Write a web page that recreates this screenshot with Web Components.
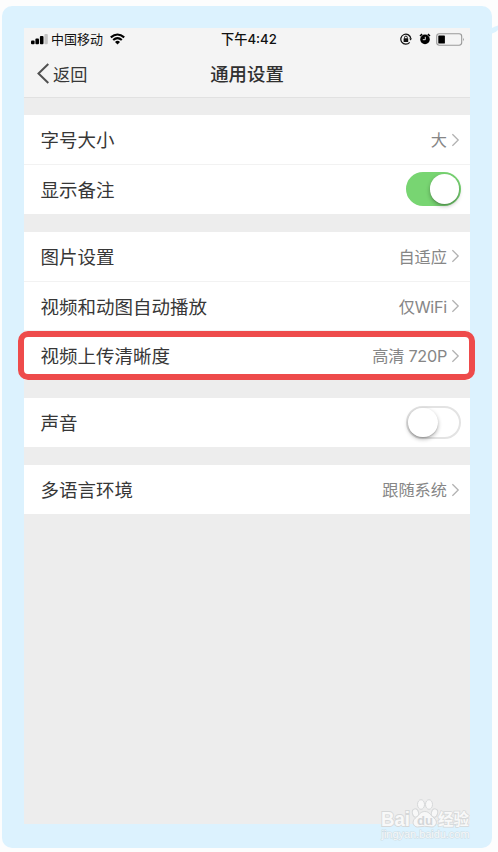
<!DOCTYPE html>
<html lang="zh-CN">
<head>
<meta charset="utf-8">
<title>通用设置</title>
<style>
    body {
        margin: 0;
        width: 498px;
        height: 852px;
        overflow: hidden;
        background: #fdfdfd;
        font-family: "Liberation Sans", "Noto Sans CJK SC", sans-serif;
        color: #373737;
    }
</style>
</head>
<body>
<phone-frame>
    <status-bar carrier="中国移动" time="下午4:42"></status-bar>
    <nav-bar back="返回">通用设置</nav-bar>
    <settings-group>
        <settings-row label="字号大小">大</settings-row>
        <settings-row label="显示备注" kind="switch"><toggle-switch on></toggle-switch></settings-row>
    </settings-group>
    <settings-group>
        <settings-row label="图片设置">自适应</settings-row>
        <settings-row label="视频和动图自动播放" tight>仅WiFi</settings-row>
        <settings-row label="视频上传清晰度" tight marked>高清 720P</settings-row>
    </settings-group>
    <settings-group>
        <settings-row label="声音" kind="switch"><toggle-switch></toggle-switch></settings-row>
    </settings-group>
    <settings-group>
        <settings-row label="多语言环境">跟随系统</settings-row>
    </settings-group>
    <site-watermark slot="overlay"></site-watermark>
</phone-frame>

<script>
class PhoneFrame extends HTMLElement {
    constructor() {
        super();
        this.attachShadow({ mode: 'open' }).innerHTML = `
            <style>
                :host {
                    display: block;
                    position: relative;
                    box-sizing: border-box;
                    width: 490px;
                    height: 842px;
                    margin: 6px 0 0 2px;
                    padding: 22px 22px 24px;
                    border-radius: 10px;
                    background: #dcf2fe;
                }
                .screen {
                    display: flex;
                    flex-direction: column;
                    height: 796px;
                    background: #ededed;
                }
                /* tail on the right edge of the bubble */
                .tail {
                    position: absolute;
                    left: 490px;
                    top: 13px;
                }
            </style>
            <svg class="tail" width="6" height="16" viewBox="0 0 6 16"><path d="M0 9Q2 7.5 6 6.5V11Q4 13.5 0 14.5Z" fill="#dcf2fe"/></svg>
            <div class="screen"><slot></slot></div>
            <slot name="overlay"></slot>
        `;
    }
}

class StatusBar extends HTMLElement {
    connectedCallback() {
        this.attachShadow({ mode: 'open' }).innerHTML = `
            <style>
                :host {
                    display: grid;
                    grid-template-columns: 1fr auto 1fr;
                    align-items: center;
                    height: 23px;
                    padding: 0 5px 0 7px;
                    background: #f4f4f4;
                    color: #111;
                    font-size: 13px;
                    line-height: 23px;
                }
                .side { display: flex; align-items: center; }
                .time {
                    font-family: Inter, "Noto Sans CJK SC", sans-serif;
                    font-weight: 500;
                    font-size: 13.2px;
                    padding-left: 2px;
                }
                .right { justify-content: flex-end; padding-bottom: 1px; }
                svg { display: block; flex: none; }
                .wifi { margin: 0 0 1px 7px; }
                .signal { margin: 0 3px 1px 0; }
                .alarm { margin: 0 5px 0 7px; }
            </style>
            <div class="side">
                <svg class="signal" width="17" height="12" viewBox="0 0 17 12">
                    <rect x="0" y="7.5" width="3.6" height="3.7" rx="1"/>
                    <rect x="4.4" y="5.6" width="3.6" height="5.6" rx="1"/>
                    <rect x="8.9" y="3" width="3.6" height="8.2" rx="1"/>
                    <rect x="13.4" y="1" width="3.4" height="10.2" rx="1" fill="#c4c4c4"/>
                </svg>
                <span>${this.getAttribute('carrier')}</span>
                <svg class="wifi" width="15" height="12" viewBox="0 0 15 12" fill="none" stroke="#000" stroke-width="2.1">
                    <path d="M.8 4.4Q7.5-1.4 14.2 4.4M3.2 7Q7.5 3.2 11.8 7"/>
                    <path d="M5 8.9Q7.5 6.8 10 8.9L7.5 11.4Z" fill="#000" stroke="none"/>
                </svg>
            </div>
            <span class="time">${this.getAttribute('time')}</span>
            <div class="side right">
                <svg width="12" height="12" viewBox="0 0 12 12" fill="none" stroke="#111">
                    <path d="M9.7 9.3A5 5 0 1 1 10.8 5.6" stroke-width="1.2"/>
                    <path d="M9.2 5.4H12L10.6 7.4Z" fill="#111" stroke="none"/>
                    <path d="M4.5 5.5V4.5a1.4 1.4 0 0 1 2.8 0v1"/>
                    <rect x="3.6" y="5.3" width="4.6" height="3.6" rx=".5" fill="#111" stroke="none"/>
                </svg>
                <svg class="alarm" width="12" height="12" viewBox="0 0 12 12">
                    <circle cx="6" cy="6.4" r="4.8"/>
                    <path d="M1 3 3.1 1.1M11 3 8.9 1.1" stroke="#000" stroke-width="1.5"/>
                    <path d="M6.3 3.8V6.7H3.8" fill="none" stroke="#f4f4f4" stroke-width=".9"/>
                </svg>
                <svg width="29" height="13" viewBox="0 0 29 13">
                    <rect x=".7" y=".8" width="25" height="11.4" rx="2.6" fill="none" stroke="#999" stroke-width="1.1"/>
                    <rect x="2.3" y="2.4" width="6.6" height="8.2" rx=".7"/>
                    <path d="M27 4.7q1.5 1.8 0 3.6z" fill="#888"/>
                </svg>
            </div>
        `;
    }
}

class NavBar extends HTMLElement {
    connectedCallback() {
        this.attachShadow({ mode: 'open' }).innerHTML = `
            <style>
                :host {
                    display: grid;
                    grid-template-columns: 1fr auto 1fr;
                    align-items: center;
                    box-sizing: border-box;
                    height: 47px;
                    padding: 0 13px 2px;
                    border-bottom: 1px solid #e1e1e1;
                    background: #f4f4f4;
                }
                .back {
                    display: flex;
                    align-items: center;
                    gap: 4px;
                    font-size: 17.2px;
                }
                .title { font-size: 18.4px; font-weight: 500; color: #303030; }
            </style>
            <span class="back">
                <svg width="12" height="21" viewBox="0 0 12 21" fill="none" stroke="#505050" stroke-width="2"><path d="M11.3 1 1.5 10.5 11.3 20"/></svg>
                ${this.getAttribute('back')}
            </span>
            <span class="title"><slot></slot></span>
        `;
    }
}

class SettingsGroup extends HTMLElement {
    constructor() {
        super();
        this.attachShadow({ mode: 'open' }).innerHTML = `
            <style>
                :host {
                    display: block;
                    margin-top: 18px;
                    background: #fff;
                }
                :host(:first-of-type) { margin-top: 17px; }
                ::slotted(:not(:first-child)) { border-top: 1px solid #f2f2f2; }
            </style>
            <slot></slot>
        `;
    }
}

class SettingsRow extends HTMLElement {
    connectedCallback() {
        const arrow = this.getAttribute('kind') !== 'switch';
        this.attachShadow({ mode: 'open' }).innerHTML = `
            <style>
                :host {
                    display: flex;
                    align-items: center;
                    justify-content: space-between;
                    position: relative;
                    box-sizing: border-box;
                    height: 49.35px;
                    padding: 0 9px 0 16.5px;
                }
                .label { font-size: 18.5px; padding-bottom: 1px; }
                .value {
                    display: flex;
                    align-items: center;
                    gap: 5px;
                    font-family: Inter, "Noto Sans CJK SC", sans-serif;
                    font-size: 16.2px;
                    color: #868686;
                }
                .text { padding-bottom: 1px; }
                /* values that mix in Latin letters or digits */
                :host([tight]) .text { letter-spacing: -.25px; }
                :host([marked])::after {
                    content: "";
                    position: absolute;
                    box-sizing: border-box;
                    left: -6px;
                    right: -5px;
                    top: -.4px;
                    height: 49px;
                    border: 6px solid #ee4b4b;
                    border-radius: 10px;
                }
            </style>
            <span class="label">${this.getAttribute('label')}</span>
            <span class="value">
                ${arrow
                    ? '<span class="text"><slot></slot></span><svg width="9" height="14" viewBox="0 0 9 14" fill="none" stroke="#b2b2b2" stroke-width="1.3"><path d="M.4 1.2 6.2 7 .4 12.8"/></svg>'
                    : '<slot></slot>'}
            </span>
        `;
    }
}

class ToggleSwitch extends HTMLElement {
    constructor() {
        super();
        this.attachShadow({ mode: 'open' }).innerHTML = `
            <style>
                :host {
                    display: flex;
                    align-items: center;
                    box-sizing: border-box;
                    width: 55px;
                    height: 33px;
                    border: 2px solid #e3e3e3;
                    border-radius: 17px;
                    background: #fff;
                }
                :host([on]) {
                    justify-content: flex-end;
                    height: 34px;
                    margin-bottom: 1px;
                    border-color: #78d572;
                    background: #78d572;
                }
                .knob {
                    width: 29.5px;
                    height: 29.5px;
                    border-radius: 50%;
                    background: #fff;
                    box-shadow: 0 2px 4px rgba(0, 0, 0, .3), 0 1px 1px rgba(0, 0, 0, .12);
                }
            </style>
            <div class="knob"></div>
        `;
    }
}

class SiteWatermark extends HTMLElement {
    constructor() {
        super();
        this.attachShadow({ mode: 'open' }).innerHTML = `
            <style>
                :host {
                    display: block;
                    position: absolute;
                    left: 376px;
                    top: 789px;
                }
                svg { display: block; }
                text { font-family: "Liberation Sans", "Noto Sans CJK SC", sans-serif; paint-order: stroke; }
            </style>
            <svg width="96" height="48" viewBox="0 0 96 48" fill="#f8f8f8" stroke="#d6d8d9" stroke-width="1">
                <text x="3" y="30.5" font-size="19.5" font-weight="700" textLength="29" lengthAdjust="spacingAndGlyphs" stroke-width="1.8">Bai</text>
                <ellipse cx="37.5" cy="18" rx="3.1" ry="4.2" transform="rotate(-15 37.5 18)"/>
                <ellipse cx="43" cy="9.5" rx="3.5" ry="4.8"/>
                <ellipse cx="51" cy="9.5" rx="3.5" ry="4.8"/>
                <ellipse cx="56.5" cy="18" rx="3.1" ry="4.2" transform="rotate(15 56.5 18)"/>
                <path d="M46.8 16.5C42 16.5 41 20.5 37.5 23C33 26.5 35.5 32 39.5 32Q46.5 30.5 54 32C58 32 60.5 26.5 56 23C52.5 20.5 51.5 16.5 46.8 16.5Z"/>
                <text x="39" y="30" font-size="13.5" font-weight="700" textLength="16" lengthAdjust="spacingAndGlyphs" fill="#d3d6d8" stroke="none">du</text>
                <text x="60" y="30" font-size="15.5" font-weight="700" stroke-width="1.4">经验</text>
                <text x="3.5" y="43" font-size="10.8" textLength="88" lengthAdjust="spacingAndGlyphs" fill="#f6f8f9" stroke="#cfdde4" stroke-width="1">jingyan.baidu.com</text>
            </svg>
        `;
    }
}

customElements.define('phone-frame', PhoneFrame);
customElements.define('status-bar', StatusBar);
customElements.define('nav-bar', NavBar);
customElements.define('settings-group', SettingsGroup);
customElements.define('settings-row', SettingsRow);
customElements.define('toggle-switch', ToggleSwitch);
customElements.define('site-watermark', SiteWatermark);
</script>
</body>
</html>
